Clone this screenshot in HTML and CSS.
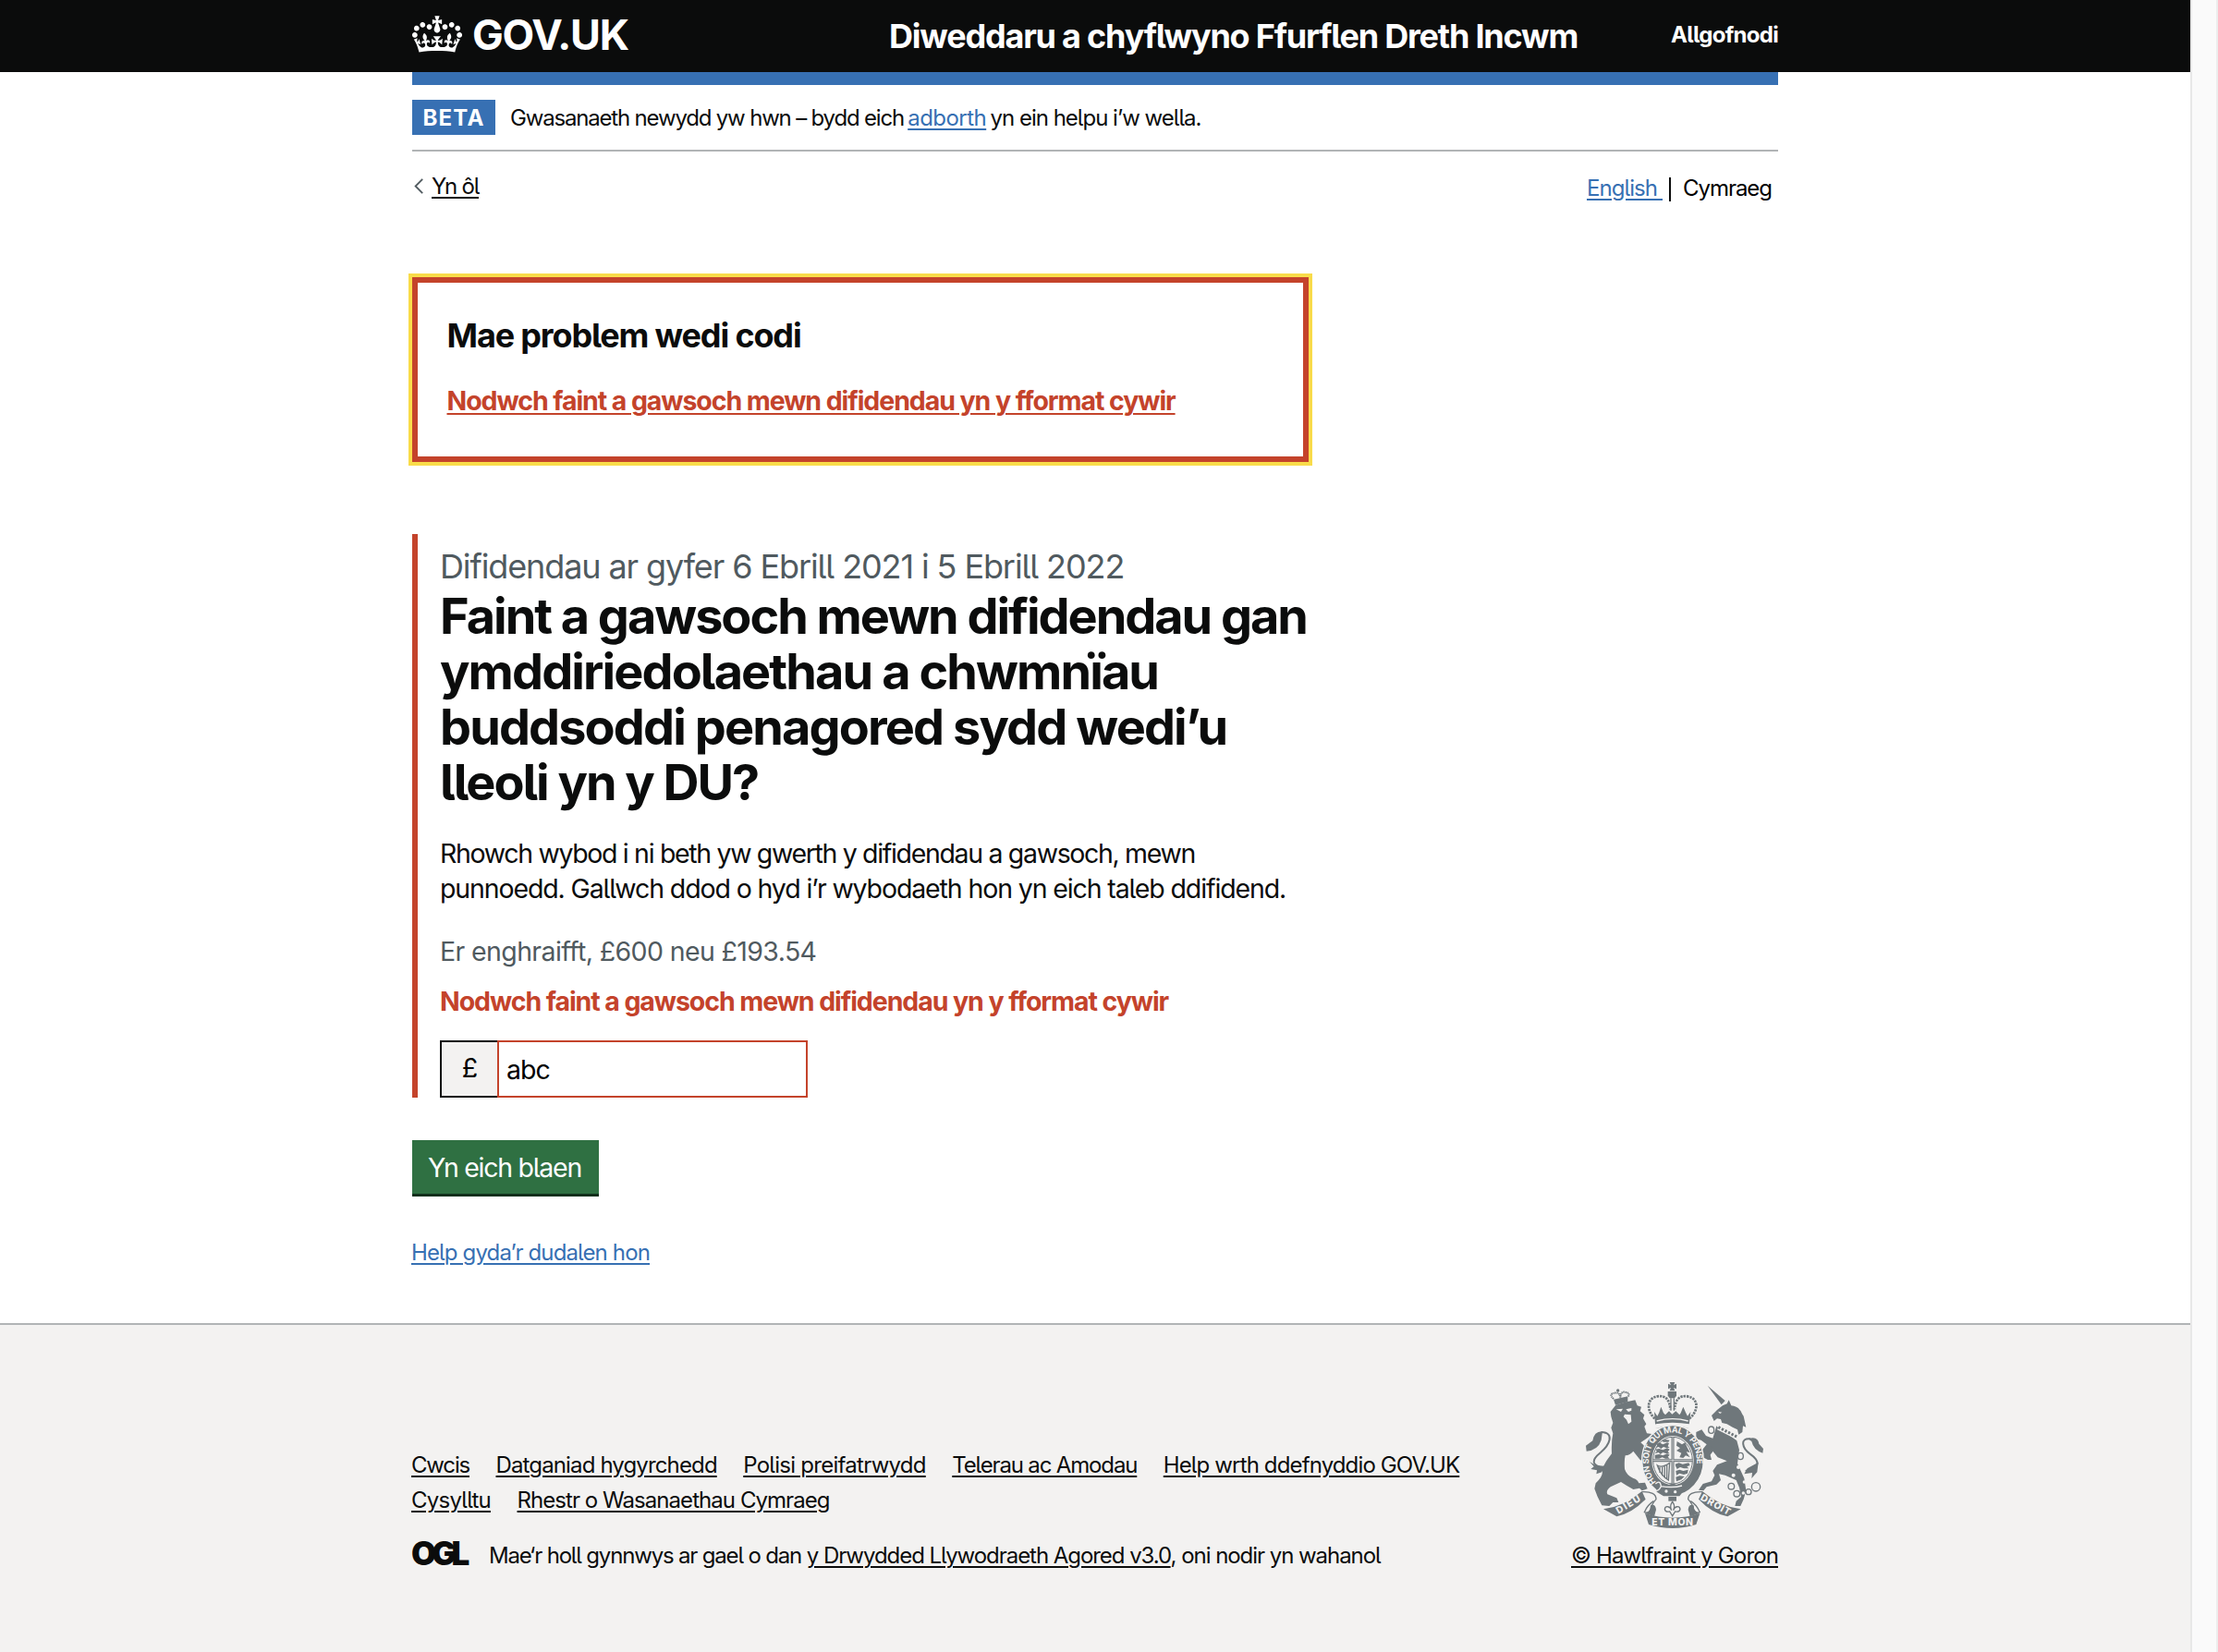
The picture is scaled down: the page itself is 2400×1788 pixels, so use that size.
FILE: index.html
```html
<!DOCTYPE html>
<html lang="cy">
<head>
<meta charset="utf-8">
<title>Difidendau - GOV.UK</title>
<link rel="stylesheet" href="styles.css">
</head>
<body>
<div class="page">
  <header class="header">
    <div class="container header-row">
      <a class="logo" href="#">
        <svg class="crown" viewBox="0 0 132 97" fill="currentColor" aria-hidden="true"><path fill-rule="evenodd" d="M25 30.2c3.5 1.5 7.7-.2 9.1-3.7 1.5-3.6-.2-7.8-3.9-9.2-3.6-1.4-7.6.3-9.1 3.9-1.4 3.5.3 7.5 3.9 9zM9 39.5c3.6 1.5 7.8-.2 9.2-3.7 1.5-3.6-.2-7.8-3.9-9.1-3.6-1.5-7.6.2-9.1 3.8-1.4 3.5.3 7.5 3.8 9zM4.4 57.2c3.5 1.5 7.7-.2 9.1-3.8 1.5-3.6-.2-7.7-3.9-9.1-3.5-1.5-7.6.3-9.1 3.8-1.4 3.5.3 7.6 3.9 9.1zm38.3-21.4c3.5 1.5 7.7-.2 9.1-3.8 1.5-3.6-.2-7.7-3.9-9.1-3.6-1.5-7.6.3-9.1 3.8-1.3 3.6.4 7.7 3.9 9.1zm64.4-5.6c-3.6 1.5-7.8-.2-9.1-3.7-1.5-3.6.2-7.8 3.8-9.2 3.6-1.4 7.7.3 9.2 3.9 1.3 3.5-.4 7.5-3.9 9zm15.9 9.3c-3.6 1.5-7.7-.2-9.1-3.7-1.5-3.6.2-7.8 3.7-9.1 3.6-1.5 7.7.2 9.2 3.8 1.5 3.5-.3 7.5-3.8 9zm4.7 17.7c-3.6 1.5-7.8-.2-9.2-3.8-1.5-3.6.2-7.7 3.9-9.1 3.6-1.5 7.7.3 9.2 3.8 1.3 3.5-.4 7.6-3.9 9.1zM89.3 35.8c-3.6 1.5-7.8-.2-9.2-3.8-1.4-3.6.2-7.7 3.9-9.1 3.6-1.5 7.7.3 9.2 3.8 1.4 3.6-.3 7.7-3.9 9.1zM69.7 17.7l8.9 4.7V9.3l-8.9 2.8c-.2-.3-.5-.6-.9-.9L72.4 0H59.6l3.5 11.2c-.3.3-.6.5-.9.9l-8.8-2.8v13.1l8.8-4.7c.3.3.6.7.9.9l-5 15.4v.1c-.2.8-.4 1.6-.4 2.4 0 4.1 3.1 7.5 7 8.1h.2c.3 0 .7.1 1 .1.4 0 .7 0 1-.1h.2c4-.6 7.1-4.1 7.1-8.1 0-.8-.1-1.7-.4-2.4V34l-5.1-15.4c.4-.2.7-.6 1-.9zM66 92.8c16.9 0 32.8 1.1 47.1 3.2 4-16.9 8.9-26.7 14-33.5l-9.6-3.4c1 4.9 1.1 7.2 0 10.2-1.5-1.4-3-4.3-4.2-8.7L108.6 76c2.8-2 5-3.2 7.5-3.3-4.4 9.4-10 11.9-13.6 11.2-4.3-.8-6.3-4.6-5.6-7.9 1-4.7 5.7-5.9 8-.5 4.3-8.7-3-11.4-7.6-8.8 7.1-7.2 7.9-13.5 2.1-21.1-8 6.1-8.1 12.3-4.5 20.8-4.7-5.4-12.1-2.5-9.5 6.2 3.4-5.2 7.9-2 7.2 3.1-.6 4.3-6.4 7.8-13.5 7.2-10.3-.9-10.9-8-11.2-13.8 2.5-.5 7.1 1.8 11 7.3L80.2 60c-4.1 4.4-8 5.3-12.3 5.4 1.4-4.4 8-11.6 8-11.6H55.5s6.4 7.2 7.9 11.6c-4.2-.1-8-1-12.3-5.4l1.4 16.4c3.9-5.5 8.5-7.7 10.9-7.3-.3 5.8-.9 12.8-11.1 13.8-7.2.6-12.9-2.9-13.5-7.2-.7-5 3.8-8.3 7.1-3.1 2.7-8.7-4.6-11.6-9.4-6.2 3.7-8.5 3.6-14.7-4.6-20.8-5.8 7.6-5 13.9 2.2 21.1-4.7-2.6-11.9.1-7.7 8.8 2.3-5.5 7.1-4.2 8.1.5.7 3.3-1.3 7.1-5.7 7.9-3.5.7-9-1.8-13.5-11.2 2.5.1 4.7 1.3 7.5 3.3l-4.7-15.4c-1.2 4.4-2.7 7.2-4.3 8.7-1.1-3-.9-5.3 0-10.2l-9.5 3.4c5 6.9 9.9 16.7 14 33.5 14.8-2.1 30.8-3.2 47.7-3.2z"/></svg>
        <span class="logo-text">GOV.UK</span>
      </a>
      <a class="service" href="#">Diweddaru a chyflwyno Ffurflen Dreth Incwm</a>
      <a class="signout" href="#">Allgofnodi</a>
    </div>
  </header>

  <div class="container">
    <div class="phase">
      <strong class="tag">BETA</strong>
      <span class="phase-text"><span class="phase-start">Gwasanaeth newydd yw hwn – bydd eich</span> <a class="link feedback" href="#">adborth</a> <span class="phase-end">yn ein helpu i’w wella.</span></span>
    </div>
    <div class="top-row">
      <a class="back" href="#">
        <svg class="chevron" viewBox="0 0 10 17" aria-hidden="true"><path d="M9.2 0.8 1.6 8.5 9.2 16.2" fill="none" stroke="#505a5f" stroke-width="1.8"/></svg>
        <span class="back-text">Yn ôl</span>
      </a>
      <div class="lang"><a class="link lang-en" href="#">English&nbsp;</a><span class="lang-cy">Cymraeg</span></div>
    </div>

    <main class="main">
      <section class="error-summary">
        <h2 class="error-title">Mae problem wedi codi</h2>
        <a class="error-link" href="#">Nodwch faint a gawsoch mewn difidendau yn y fformat cywir</a>
      </section>

      <form class="form-group">
        <span class="caption">Difidendau ar gyfer 6 Ebrill 2021 i 5 Ebrill 2022</span>
        <h1 class="heading">
          <span>Faint a gawsoch mewn difidendau gan</span>
          <span>ymddiriedolaethau a chwmnïau</span>
          <span>buddsoddi penagored sydd wedi’u</span>
          <span>lleoli yn y DU?</span>
        </h1>
        <p class="body">
          <span>Rhowch wybod i ni beth yw gwerth y difidendau a gawsoch, mewn</span>
          <span>punnoedd. Gallwch ddod o hyd i’r wybodaeth hon yn eich taleb ddifidend.</span>
        </p>
        <span class="hint">Er enghraifft, £600 neu £193.54</span>
        <span class="error-message">Nodwch faint a gawsoch mewn difidendau yn y fformat cywir</span>
        <div class="amount">
          <span class="prefix">£</span>
          <span class="field">abc</span>
        </div>
      </form>
      <a class="button" href="#">Yn eich blaen</a>
      <a class="link help" href="#">Help gyda’r dudalen hon</a>
    </main>
  </div>

  <footer class="footer">
    <div class="container footer-row">
      <div class="footer-main">
        <div class="footer-links">
          <a href="#">Cwcis</a>
          <a href="#">Datganiad hygyrchedd</a>
          <a href="#">Polisi preifatrwydd</a>
          <a href="#">Telerau ac Amodau</a>
          <a href="#">Help wrth ddefnyddio GOV.UK</a>
          <a href="#">Cysylltu</a>
          <a href="#">Rhestr o Wasanaethau Cymraeg</a>
        </div>
        <div class="licence">
          <span class="ogl">OGL</span>
          <span class="licence-text"><span class="licence-start">Mae‘r holl gynnwys ar gael o dan</span> <a href="#">y Drwydded Llywodraeth Agored v3.0</a>, oni nodir yn wahanol</span>
        </div>
      </div>
      <div class="copyright">
        <svg class="crest" viewBox="108 48 576 474" aria-hidden="true">
          <defs>
            <path id="garter" d="M336 372A76 90 0 0 1 312 302A78 91 0 0 1 468 302A76 90 0 0 1 428 386"/>
          </defs>
          <g fill="#6f777b">
            <!-- lion -->
            <path d="M188 144 205 122 240 112 268 106 275 124 288 128 284 142 298 154 294 166 304 184 298 192 306 214 322 216 312 226 286 244Q302 256 308 280L324 308 312 326 294 318 298 306 284 300 262 272Q252 284 236 286 232 300 234 330 240 350 262 360 276 364 280 376L300 374 308 394 290 400 282 392 262 396Q240 384 222 372L188 388Q172 400 178 412L208 424 214 438 196 438 184 450 160 448 146 420 136 394 140 376Q168 350 160 330 172 304 192 280 190 240 196 214L190 196 196 180 190 160Z"/>
            <path d="M162 208Q135 206 130 238L108 254 110 272Q148 268 158 236Z"/>
            <path d="M158 210C204 212 184 252 156 276 124 302 126 318 166 326" fill="none" stroke="#6f777b" stroke-width="6"/>
            <path d="M120 306 140 318 168 320 160 340 142 346 144 334 124 330 134 322Z"/>
            <path d="M198 104 204 122 244 112 244 94Z"/>
            <path d="M198 102Q178 84 208 82 218 84 220 98 220 78 236 80 254 84 244 96" fill="none" stroke="#6f777b" stroke-width="6" stroke-dasharray="4 2"/>
            <circle cx="212" cy="75" r="5"/>
            <!-- unicorn -->
            <path d="M503 59 560 108 548 121Z"/>
            <path d="M516 156 534 138 552 124 566 118 572 106 580 124Q606 126 616 152L620 158 628 194 618 190 616 210 604 218 600 202 584 194 566 184 550 180 546 168 534 166 524 174Z"/>
            <path d="M532 190 546 206 574 220 598 238 606 268 600 312 622 360 628 400 620 428 610 450 592 450 596 434 612 420 606 390 596 366 560 350 540 346 546 366 532 380 500 388 490 400 474 398 488 378 516 370 526 350 520 336 534 316 566 304 536 292 520 272 512 284 516 300 504 300 488 292 486 268 500 250 482 236 466 232 466 210 484 202 498 222 520 230Z"/>
            <path d="M634 232Q666 220 670 248L684 264 682 278Q652 268 646 240Z"/>
            <path d="M642 232C606 228 616 262 640 280 674 304 676 326 626 336" fill="none" stroke="#6f777b" stroke-width="6"/>
            <path d="M668 308 664 340 646 360 648 342 622 346 632 328Z"/>
            <path d="M538 194 600 226" stroke="#f3f2f1" stroke-width="17" fill="none"/>
            <path d="M538 194 600 226" stroke="#6f777b" stroke-width="9" stroke-dasharray="7 5" fill="none"/>
            <g fill="none" stroke="#6f777b" stroke-width="4"><ellipse cx="515" cy="203" rx="9" ry="11"/><circle cx="508" cy="268" r="10"/><ellipse cx="610" cy="288" rx="9" ry="11"/><circle cx="580" cy="386" r="10"/><circle cx="598" cy="410" r="10"/><circle cx="636" cy="404" r="9"/><circle cx="660" cy="388" r="14"/></g>
            <g fill="#f3f2f1"><circle cx="603" cy="324" r="6"/><circle cx="587" cy="350" r="6"/><circle cx="622" cy="372" r="5"/><circle cx="619" cy="408" r="5"/>
              <path d="M206 136 228 134 222 144Z"/><path d="M238 136 256 132 256 140 246 144Z"/><path d="M234 152 254 154 256 176 246 184 240 170 230 160Z"/><path d="M537 143 550 146 543 150Z"/></g>
            <!-- imperial crown -->
            <path d="M380 48H397L393 57 402 53V70L393 66 397 76H380L384 66 375 70V53L384 57Z"/>
            <path d="M374 78H402V92L396 100 380 100 374 92Z"/>
            <path d="M332 166C308 146 300 102 340 94 366 90 380 104 382 136M444 166C470 146 480 102 438 94 412 90 398 104 396 136" fill="none" stroke="#6f777b" stroke-width="8" stroke-dasharray="7 3"/>
            <path d="M384 100V140M394 100V140" stroke="#6f777b" stroke-width="4"/>
            <path d="M330 144 340 158 346 146 352 128 360 148 366 154 378 142 388 152 400 142 412 154 416 148 424 128 432 146 438 158 448 144 442 196 334 196Z"/>
            <path d="M338 174Q390 160 440 174" fill="none" stroke="#f3f2f1" stroke-width="4"/>
            <path d="M330 198 334 184Q390 174 444 184L448 198Q390 184 330 198Z" fill="#f3f2f1"/>
            <!-- garter and shield -->
            <ellipse cx="390" cy="302" rx="100" ry="114" stroke="#f3f2f1" stroke-width="4"/>
            <ellipse cx="390" cy="302" rx="68" ry="80" fill="#f3f2f1"/>
            <ellipse cx="390" cy="302" rx="64" ry="76" fill="none" stroke="#6f777b" stroke-width="3"/>
            <path d="M390 226V378M326 302H454" stroke="#6f777b" stroke-width="9"/>
            <path d="M390 226V378M326 302H454" stroke="#f3f2f1" stroke-width="2"/>
            <path d="M338 248 346 244 358 250 372 244 378 246 374 256 380 260 370 262 360 258 352 264 344 258 334 262 340 254Z"/>
            <path d="M334 266 346 264 358 268 372 262 380 266 374 274 380 280 370 280 358 276 350 282 344 276 332 280 338 272Z"/>
            <path d="M332 284 346 282 358 286 372 280 380 284 374 290 380 296 366 296 356 292 346 296 332 296Z"/>
            <path d="M354 238 366 234 380 236 376 242 360 242Z"/>
            <path d="M404 240 420 250 430 244 438 262 446 276 434 274 446 292 432 286 424 294 412 292 418 278 402 270 414 262 402 254Z"/>
            <path d="M398 314 410 310 422 314 442 310 446 318 436 322 442 328 426 328 414 324 404 330 400 322Z"/>
            <path d="M400 336 412 332 424 336 440 332 438 344 426 348 412 344 402 350Z"/>
            <path d="M400 356 412 352 428 354 418 364 402 370Z"/>
            <path d="M340 318Q354 328 380 310L376 366Q350 350 340 318ZM348 324V342M356 324V352M364 322V358M371 318V360" fill="none" stroke="#6f777b" stroke-width="4"/>
            <path d="M334 380Q346 362 356 384L376 382Q392 372 404 384L432 392 412 418H360L338 404Z"/>
            <path d="M334 378Q350 364 352 386 346 400 336 400M352 386Q392 392 420 384" fill="none" stroke="#f3f2f1" stroke-width="4"/>
            <circle cx="369" cy="402" r="5" fill="#f3f2f1"/><circle cx="398" cy="404" r="5" fill="#f3f2f1"/>
            <text class="crest-garter"><textPath href="#garter">HON SOIT QUI MAL Y PENSE</textPath></text>
            <!-- fleur-de-lis -->
            <path d="M376 420H402V434H376Z"/>
            <path d="M389 436C378 450 384 458 386 464 382 450 366 448 364 460 366 472 376 468 380 468L389 482 398 468C402 468 412 472 414 460 412 448 396 450 392 464 394 458 400 450 389 436Z" fill="#f3f2f1" stroke="#6f777b" stroke-width="4"/>
            <!-- motto ribbon -->
            <path d="M165 460Q232 452 290 402L302 428Q258 474 208 484Z"/>
            <path d="M611 460Q544 452 486 402L474 428Q518 474 568 484Z"/>
            <path d="M290 404Q336 402 336 428 320 446 318 462 310 476 298 470 308 446 328 434M486 404Q440 402 440 428 456 446 458 462 466 476 478 470 468 446 448 434" fill="none" stroke="#6f777b" stroke-width="4"/>
            <path d="M300 474Q390 502 478 474L466 510Q390 534 312 510Z"/>
            <path d="M318 448Q334 442 336 462L330 484 300 474Q318 470 318 448ZM458 448Q442 442 440 462L446 484 478 474Q458 470 458 448Z"/>
            <g class="crest-motto"><text x="214" y="476" transform="rotate(-31 214 476)" textLength="86">DIEU</text><text x="322" y="514" textLength="134">ET MON</text><text x="478" y="429" transform="rotate(29 478 429)" textLength="106">DROIT</text></g>
          </g>
        </svg>
        <a class="copyright-link" href="#">© Hawlfraint y Goron</a>
      </div>
    </div>
  </footer>
</div>
<div class="scrollbar"></div>
</body>
</html>
```
FILE: styles.css
```css
* { box-sizing: border-box; }

body {
  margin: 0;
  display: flex;
  height: 1788px;
  overflow: hidden;
  background: #fff;
  color: #0b0c0c;
  font: 24px/30px Inter, Roboto, "Liberation Sans", sans-serif;
  font-feature-settings: "cv05", "calt" 0;
}

a { color: inherit; text-decoration: none; }
h1, h2, p { margin: 0; }

.page {
  display: flex;
  flex-direction: column;
  width: 2370px;
  height: 1788px;
}

.scrollbar {
  width: 30px;
  background: #fafafa;
  border-left: 2px solid #e8e8e8;
  border-right: 2px solid #ededed;
}

.container { width: 1478px; margin: 0 auto; white-space: nowrap; }

/* Header */
.header { height: 78px; background: #0b0c0c; color: #fff; font-weight: 700; }
.header-row { display: flex; align-items: flex-start; }
.logo { display: flex; width: 516px; padding-top: 15px; }
.crown { width: 54px; height: 40px; margin: 2px 11px 0 0; }
.logo-text { font-size: 45px; line-height: 45px; letter-spacing: -.027em; }
.service { padding-top: 17px; font-size: 36px; line-height: 45px; letter-spacing: -.0336em; }
.signout { margin-left: auto; padding-top: 23px; letter-spacing: -.0292em; }

/* Phase banner */
.phase {
  display: flex;
  align-items: center;
  gap: 16px;
  height: 86px;
  border-top: 14px solid #3770b3;
  border-bottom: 2px solid #b1b4b6;
}
.tag {
  width: 90px;
  height: 38px;
  background: #3770b3;
  color: #fff;
  line-height: 40px;
  letter-spacing: 1.2px;
  text-align: center;
}
.phase-text { padding-top: 2px; letter-spacing: -2.5px; }
.phase-start { letter-spacing: -.0494em; }
.feedback { letter-spacing: -.0221em; }
.phase-end { letter-spacing: -.0414em; }

.link { color: #3770b3; }
.link, .back-text, .error-link, .footer a {
  text-decoration: underline;
  text-decoration-thickness: 2px;
  text-underline-offset: 2.5px;
}

.top-row { display: flex; justify-content: space-between; padding-top: 23px; }
.back { display: flex; gap: 9px; padding-left: 2px; }
.back-text { letter-spacing: -.0523em; }
.chevron { width: 10px; height: 17px; margin-top: 6px; }
.lang { display: flex; padding: 2px 7px 0 0; }
.lang-en { letter-spacing: -.0383em; }
.lang-cy { position: relative; margin-left: 22px; color: #000; letter-spacing: -.0432em; }
.lang-cy::before {
  content: "";
  position: absolute;
  left: -15px;
  top: 3px;
  width: 2px;
  height: 26px;
  background: #0b0c0c;
}

/* Error summary */
.main { display: flex; flex-direction: column; align-items: flex-start; padding-top: 81px; }
.error-summary {
  width: 970px;
  height: 200px;
  padding: 35px 30px 0 31.5px;
  border: 6px solid #c4432b;
  outline: 4px solid #f9dc4a;
}
.error-title { font-size: 36px; line-height: 45px; letter-spacing: -.0319em; }
.error-link, .error-message {
  color: #c4432b;
  font-weight: 700;
  font-size: 28.5px;
  line-height: 37.5px;
  letter-spacing: -.0378em;
}
.error-link { display: inline-block; margin-top: 29px; }

/* Question */
.form-group {
  display: flex;
  flex-direction: column;
  align-items: flex-start;
  width: 970px;
  height: 610px;
  margin-top: 78px;
  padding: 13px 0 0 24px;
  border-left: 6px solid #c4432b;
}
.caption { color: #505a5f; font-size: 36px; line-height: 45px; letter-spacing: -.0308em; }
.heading { margin-top: 1px; font-size: 54px; line-height: 60px; letter-spacing: -.0376em; }
.heading span, .body span { display: block; width: max-content; }
.heading span:nth-child(2) { letter-spacing: -.0352em; }
.heading span:nth-child(3) { letter-spacing: -.0348em; }
.body { margin-top: 28px; font-size: 28.5px; line-height: 37.5px; letter-spacing: -.0468em; }
.body span:nth-child(2) { letter-spacing: -.0394em; }
.hint { margin-top: 31px; color: #505a5f; font-size: 28.5px; line-height: 37.5px; letter-spacing: -.0215em; }
.error-message { margin-top: 16px; }
.amount { display: flex; margin-top: auto; height: 62px; font-size: 28.5px; color: #000; letter-spacing: -.0322em; }
.prefix {
  width: 62px;
  border: 2px solid #0b0c0c;
  border-right: 0;
  background: #f3f2f1;
  line-height: 55px;
  text-align: center;
}
.field { width: 336px; border: 2px solid #c4432b; padding-left: 8px; line-height: 59px; }

.button {
  height: 58px;
  width: 202px;
  margin-top: 46px;
  padding-right: 2px;
  background: #2f7042;
  box-shadow: 0 3px 0 #0f2f1b;
  color: #fff;
  font-size: 28.5px;
  line-height: 59px;
  letter-spacing: -.0445em;
  text-align: center;
}
.help { margin: 49px 0 0 -1px; letter-spacing: -.036em; }

/* Footer */
.footer {
  flex: none;
  height: 356px;
  margin-top: auto;
  border-top: 2px solid #b1b4b6;
  background: #f3f2f1;
}
.footer-row { display: flex; justify-content: space-between; padding-top: 62px; }
.footer-main { width: 1160px; margin-left: -1px; padding-top: 75px; }
.footer-links { display: flex; flex-wrap: wrap; gap: 8px 28.5px; letter-spacing: -.036em; }
.footer-links a:nth-child(1) { letter-spacing: -.0495em; }
.footer-links a:nth-child(3) { letter-spacing: -.0307em; }
.footer-links a:nth-child(4) { letter-spacing: -.048em; }
.footer-links a:nth-child(6) { letter-spacing: -.0311em; }
.footer-links a:nth-child(7) { letter-spacing: -.0394em; }
.licence { display: flex; gap: 20px; margin-top: 30px; }
.licence-text { letter-spacing: -.0436em; }
.licence-start { letter-spacing: -.049em; }
.ogl {
  width: 64px;
  font-size: 35px;
  font-weight: 900;
  letter-spacing: -5px;
  line-height: 24px;
}
.copyright { display: flex; flex-direction: column; align-items: center; width: 224px; }
.crest { width: 192px; height: 158px; }
.copyright-link { margin-top: 15px; letter-spacing: -.0363em; }
.crest-garter { fill: #f3f2f1; font-size: 27px; font-weight: 700; letter-spacing: -1px; }
.crest-motto { fill: #f3f2f1; font-size: 31px; font-weight: 800; }
```
